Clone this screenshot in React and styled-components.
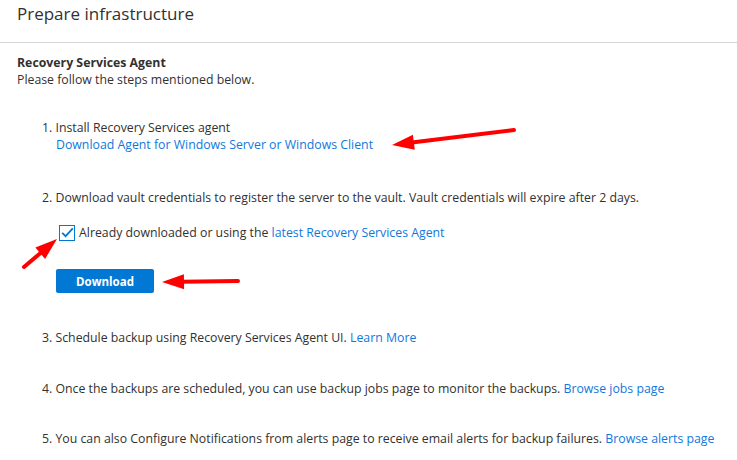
import React from 'react'
import styled, { createGlobalStyle } from 'styled-components'

const GlobalStyle = createGlobalStyle`
  html, body {
    margin: 0;
    padding: 0;
    background: #fff;
  }
  body {
    font-family: "Open Sans", "Noto Sans", sans-serif;
    color: #323130;
  }
`

const steps = [
  { n: 3, text: 'Schedule backup using Recovery Services Agent UI.', link: 'Learn More', offset: 2 },
  { n: 4, text: 'Once the backups are scheduled, you can use backup jobs page to monitor the backups.', link: 'Browse jobs page', offset: 0 },
  { n: 5, text: 'You can also Configure Notifications from alerts page to receive email alerts for backup failures.', link: 'Browse alerts page', offset: -1 },
]

function Arrow({ x1, y1, x2, y2 }) {
  const angle = Math.atan2(y2 - y1, x2 - x1)
  const len = 22
  const w = 7.5
  const bx = x2 - len * Math.cos(angle)
  const by = y2 - len * Math.sin(angle)
  const px = -Math.sin(angle) * w
  const py = Math.cos(angle) * w
  return (
    <g>
      <line x1={x1} y1={y1} x2={bx + 2 * Math.cos(angle)} y2={by + 2 * Math.sin(angle)} stroke="#ff0000" strokeWidth="4" strokeLinecap="round" />
      <polygon points={`${x2},${y2} ${bx + px},${by + py} ${bx - px},${by - py}`} fill="#ff0000" />
    </g>
  )
}

export default function App() {
  return (
    <Page>
      <GlobalStyle />
      <Header>Prepare infrastructure</Header>
      <Body>
        <SectionTitle>Recovery Services Agent</SectionTitle>
        <Text>Please follow the steps mentioned below.</Text>
        <Steps>
          <Step>
            <Text>1. Install Recovery Services agent</Text>
            <SubLine>
              <Link>Download Agent for Windows Server or Windows Client</Link>
            </SubLine>
          </Step>
          <Step $offset={2}>
            <Text>2. Download vault credentials to register the server to the vault. Vault credentials will expire after 2 days.</Text>
            <CheckRow>
              <Checkbox>
                <svg width="13" height="11" viewBox="0 0 13 11">
                  <path d="M1.2 5.8 L4.6 9.2 L11.8 1.4" fill="none" stroke="#0078d4" strokeWidth="1.8" />
                </svg>
              </Checkbox>
              <Text>
                Already downloaded or using the <Link>latest Recovery Services Agent</Link>
              </Text>
            </CheckRow>
            <Button>Download</Button>
          </Step>
          {steps.map((s) => (
            <Step key={s.n} $offset={s.offset}>
              <Text>
                {s.n}. {s.text} <Link>{s.link}</Link>
              </Text>
            </Step>
          ))}
        </Steps>
      </Body>
      <Overlay width="737" height="460" viewBox="0 0 737 460">
        <Arrow x1={514} y1={130} x2={392} y2={145} />
        <Arrow x1={238} y1={281} x2={162} y2={282} />
        <Arrow x1={24} y1={267} x2={57} y2={239} />
      </Overlay>
    </Page>
  )
}

const Page = styled.div`
  position: relative;
  width: 737px;
  height: 460px;
  overflow: hidden;
  background: #fff;
`
const Header = styled.div`
  height: 43px;
  box-sizing: border-box;
  padding: 0 0 0 17px;
  font-size: 17px;
  line-height: 28px;
  color: #323130;
  border-bottom: 1px solid #d6d6d6;
`
const Body = styled.div`
  padding: 11px 17px 0 17px;
`
const SectionTitle = styled.div`
  font-size: 12.3px;
  font-weight: 700;
  line-height: 17px;
`
const Text = styled.div`
  font-size: 12.3px;
  line-height: 17px;
  white-space: nowrap;
`
const Steps = styled.div`
  display: flex;
  flex-direction: column;
  gap: 34px;
  padding: 31px 0 0 25px;
`
const Step = styled.div`
  display: flex;
  flex-direction: column;
  margin-top: ${({ $offset }) => $offset || 0}px;
`
const SubLine = styled.div`
  padding-left: 14px;
  font-size: 12.3px;
  line-height: 17px;
`
const Link = styled.span`
  color: #0f78de;
  font-size: 12.3px;
  cursor: pointer;
`
const CheckRow = styled.div`
  display: flex;
  align-items: center;
  gap: 4px;
  margin: 18px 0 0 17px;
`
const Checkbox = styled.div`
  width: 16px;
  height: 16px;
  box-sizing: border-box;
  border: 1px solid #0078d4;
  display: flex;
  align-items: center;
  justify-content: center;
`
const Button = styled.button`
  margin: 28px 0 0 14px;
  width: 98px;
  height: 24px;
  background: #0078d4;
  color: #fff;
  border: none;
  border-radius: 2px;
  font-family: "Open Sans", "Noto Sans", sans-serif;
  font-weight: 700;
  font-size: 11.5px;
`
const Overlay = styled.svg`
  position: absolute;
  left: 0;
  top: 0;
  pointer-events: none;
`
